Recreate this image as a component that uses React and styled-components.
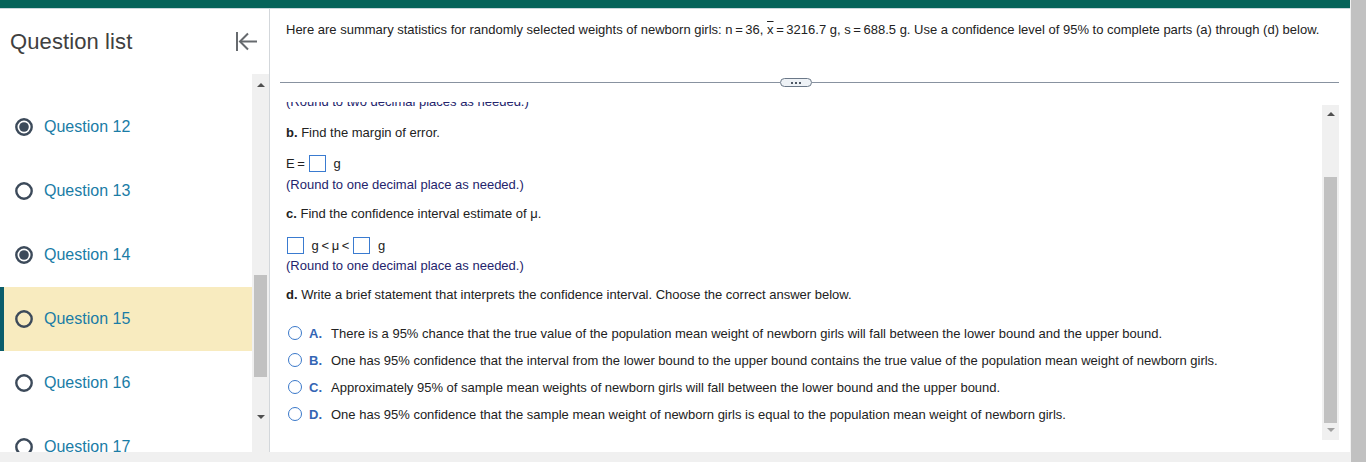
import React from 'react';
import styled, { createGlobalStyle } from 'styled-components';

const GlobalStyle = createGlobalStyle`
  html, body {
    margin: 0;
    padding: 0;
    background: #ffffff;
    overflow: hidden;
  }
  body {
    font-family: "Liberation Sans", Arial, Helvetica, sans-serif;
  }
`;

const Page = styled.div`
  display: flex;
  width: 1366px;
  height: 462px;
  overflow: hidden;
`;

const Main = styled.div`
  flex: 1;
  display: flex;
  flex-direction: column;
  min-width: 0;
`;

const TopBar = styled.div`
  height: 8px;
  background: #05635a;
  border-bottom: 1px solid #c9d6dc;
`;

const Body = styled.div`
  flex: 1;
  display: flex;
  min-height: 0;
`;

const BottomStrip = styled.div`
  height: 10px;
  background: #f0f0f0;
`;

const PageScroll = styled.div`
  width: 16px;
  background: #f1f1f1;
  display: flex;
  justify-content: flex-end;
`;

const PageThumb = styled.div`
  width: 15px;
  background: #c1c1c1;
`;

/* sidebar */
const Sidebar = styled.aside`
  width: 269px;
  border-right: 1px solid #d3d7db;
  display: flex;
  flex-direction: column;
`;

const SidebarHead = styled.div`
  height: 65px;
  display: flex;
  align-items: center;
  justify-content: space-between;
  padding: 0 11px 0 10px;
`;

const SidebarTitle = styled.h2`
  margin: 0;
  font-size: 22px;
  font-weight: 400;
  color: #404040;
  letter-spacing: 0.1px;
`;

const CollapseButton = styled.button`
  border: none;
  background: none;
  padding: 0;
  display: flex;
  cursor: pointer;
`;

const ListWrap = styled.div`
  flex: 1;
  display: flex;
  min-height: 0;
`;

const List = styled.ul`
  flex: 1;
  list-style: none;
  margin: 0;
  padding: 21px 0 0;
  overflow: hidden;
`;

const Item = styled.li`
  height: 64px;
  display: flex;
  align-items: center;
  gap: 11px;
  padding-left: ${p => (p.$current ? '11px' : '15px')};
  background: ${p => (p.$current ? '#f8ebbf' : 'transparent')};
  border-left: ${p => (p.$current ? '4px solid #0b5d6b' : 'none')};
  box-sizing: border-box;
`;

const ItemLabel = styled.span`
  font-size: 16px;
  color: #1a7ca6;
`;

const Scrollbar = styled.div`
  width: 17px;
  background: #f0f0f0;
  display: flex;
  flex-direction: column;
  align-items: center;
  margin: ${p => p.$margin || '0'};
`;

const Arrow = styled.div`
  width: 0;
  height: 0;
  border-left: 4px solid transparent;
  border-right: 4px solid transparent;
  ${p => (p.$down
    ? `border-top: 4px solid ${p.$color || '#505050'}; margin-top: 5px;`
    : `border-bottom: 4px solid ${p.$color || '#505050'}; margin-top: ${p.$top || 7}px;`)}
`;

const Thumb = styled.div`
  width: 13px;
  background: #c1c1c1;
  margin-top: ${p => p.$top}px;
  height: ${p => p.$height}px;
`;

const Spacer = styled.div`
  flex: 1;
`;

/* content */
const Content = styled.section`
  flex: 1;
  display: flex;
  flex-direction: column;
  min-width: 0;
`;

const Intro = styled.p`
  margin: 0;
  padding: 13px 0 0 16px;
  height: 69px;
  box-sizing: border-box;
  font-size: 13px;
  line-height: 16px;
  color: #222222;
  white-space: nowrap;
`;

const Bar = styled.span`
  text-decoration: overline;
`;

const Divider = styled.div`
  display: flex;
  align-items: center;
  height: 9px;
  margin: 0 11px 0 10px;
`;

const Rule = styled.div`
  height: 1px;
  background: #8892a0;
  flex: ${p => (p.$grow ? 1 : 'none')};
  width: ${p => (p.$grow ? 'auto' : '500px')};
`;

const MorePill = styled.button`
  width: 32px;
  height: 9px;
  box-sizing: border-box;
  border: 1.5px solid #6b7888;
  border-radius: 5px;
  background: #eef2f6;
  padding: 0;
  display: flex;
  align-items: center;
  justify-content: center;
  gap: 2px;
`;

const Dot = styled.span`
  width: 2px;
  height: 2px;
  background: #4f5966;
`;

const Work = styled.div`
  flex: 1;
  display: flex;
  min-height: 0;
`;

const Scroller = styled.div`
  flex: 1;
  margin-top: 15px;
  overflow: hidden;
  padding-left: 16px;
`;

const Line = styled.div`
  margin-top: ${p => p.$mt}px;
  font-size: 13px;
  line-height: 16px;
  color: ${p => (p.$note ? '#24246c' : '#222222')};
  display: flex;
  align-items: center;
  white-space: nowrap;
`;

const AnswerRow = styled.div`
  margin-top: ${p => p.$mt}px;
  height: 18px;
  display: flex;
  align-items: center;
  gap: 4px;
  font-size: 13px;
  color: #222222;
`;

const Box = styled.span`
  width: 15px;
  height: 15px;
  border: 1px solid #3a7bd0;
  background: #ffffff;
  display: inline-block;
  margin-left: ${p => p.$ml || 0}px;
`;

const Options = styled.div`
  margin-top: 22px;
  display: flex;
  flex-direction: column;
  gap: 11px;
`;

const Option = styled.label`
  display: flex;
  align-items: center;
  height: 16px;
  font-size: 13px;
  color: #222222;
  white-space: nowrap;
`;

const OptionRadio = styled.span`
  width: 12px;
  height: 12px;
  border: 1.3px solid #3a78c9;
  border-radius: 50%;
  margin: 0 7px 0 2px;
  box-sizing: content-box;
`;

const OptionLetter = styled.b`
  color: #3465b4;
  width: 22px;
`;

function QRadio({ filled }) {
  return (
    <svg width="18" height="18" viewBox="0 0 18 18">
      <circle cx="9" cy="9" r="7.7" fill="none" stroke="#3c4a5a" strokeWidth="2.4" />
      {filled && <circle cx="9" cy="9" r="4.8" fill="#3c4a5a" />}
    </svg>
  );
}

function CollapseIcon() {
  return (
    <svg width="23" height="21" viewBox="0 0 23 21" fill="none" stroke="#666a6e" strokeWidth="2">
      <path d="M2 1v19" />
      <path d="M5 10.5h17" />
      <path d="M13 2.5l-8 8 8 8" />
    </svg>
  );
}

const questions = [
  { n: 12, done: true },
  { n: 13, done: false },
  { n: 14, done: true },
  { n: 15, done: false, current: true },
  { n: 16, done: false },
  { n: 17, done: false },
];

const options = [
  ['A.', 'There is a 95% chance that the true value of the population mean weight of newborn girls will fall between the lower bound and the upper bound.'],
  ['B.', 'One has 95% confidence that the interval from the lower bound to the upper bound contains the true value of the population mean weight of newborn girls.'],
  ['C.', 'Approximately 95% of sample mean weights of newborn girls will fall between the lower bound and the upper bound.'],
  ['D.', 'One has 95% confidence that the sample mean weight of newborn girls is equal to the population mean weight of newborn girls.'],
];

export default function App() {
  return (
    <>
      <GlobalStyle />
      <Page>
        <Main>
          <TopBar />
          <Body>
            <Sidebar>
              <SidebarHead>
                <SidebarTitle>Question list</SidebarTitle>
                <CollapseButton aria-label="Collapse question list">
                  <CollapseIcon />
                </CollapseButton>
              </SidebarHead>
              <ListWrap>
                <List>
                  {questions.map(q => (
                    <Item key={q.n} $current={q.current}>
                      <QRadio filled={q.done} />
                      <ItemLabel>Question {q.n}</ItemLabel>
                    </Item>
                  ))}
                </List>
                <Scrollbar>
                  <Arrow $top={9} />
                  <Thumb $top={188} $height={102} />
                  <Spacer />
                  <Arrow $down />
                  <Spacer />
                </Scrollbar>
              </ListWrap>
            </Sidebar>
            <Content>
              <Intro>
                Here are summary statistics for randomly selected weights of newborn girls: n{'\u2009'}={'\u2009'}36,{' '}
                <Bar>x</Bar>{'\u2009'}={'\u2009'}3216.7 g, s{'\u2009'}={'\u2009'}688.5 g. Use a confidence level of 95% to complete parts (a) through (d) below.
              </Intro>
              <Divider>
                <Rule />
                <MorePill aria-label="More">
                  <Dot /><Dot /><Dot />
                </MorePill>
                <Rule $grow />
              </Divider>
              <Work>
                <Scroller>
                  <Line $mt={-8} $note>(Round to two decimal places as needed.)</Line>
                  <Line $mt={15}><b>b.</b>&nbsp;Find the margin of error.</Line>
                  <AnswerRow $mt={13}>
                    E{'\u2009'}=<Box />&nbsp;g
                  </AnswerRow>
                  <Line $mt={5} $note>(Round to one decimal place as needed.)</Line>
                  <Line $mt={13}><b>c.</b>&nbsp;Find the confidence interval estimate of μ.</Line>
                  <AnswerRow $mt={14}>
                    <Box $ml={1} />&nbsp;g{'\u2009'}&lt;{'\u2009'}μ{'\u2009'}&lt;<Box />&nbsp;g
                  </AnswerRow>
                  <Line $mt={4} $note>(Round to one decimal place as needed.)</Line>
                  <Line $mt={13}><b>d.</b>&nbsp;Write a brief statement that interprets the confidence interval. Choose the correct answer below.</Line>
                  <Options>
                    {options.map(([letter, text]) => (
                      <Option key={letter}>
                        <OptionRadio />
                        <OptionLetter>{letter}</OptionLetter>
                        {text}
                      </Option>
                    ))}
                  </Options>
                </Scroller>
                <Scrollbar $margin="18px 11px 12px 0">
                  <Arrow />
                  <Thumb $top={61} $height={246} />
                  <Arrow $down $color="#a0a0a0" />
                </Scrollbar>
              </Work>
            </Content>
          </Body>
          <BottomStrip />
        </Main>
        <PageScroll>
          <PageThumb />
        </PageScroll>
      </Page>
    </>
  );
}
